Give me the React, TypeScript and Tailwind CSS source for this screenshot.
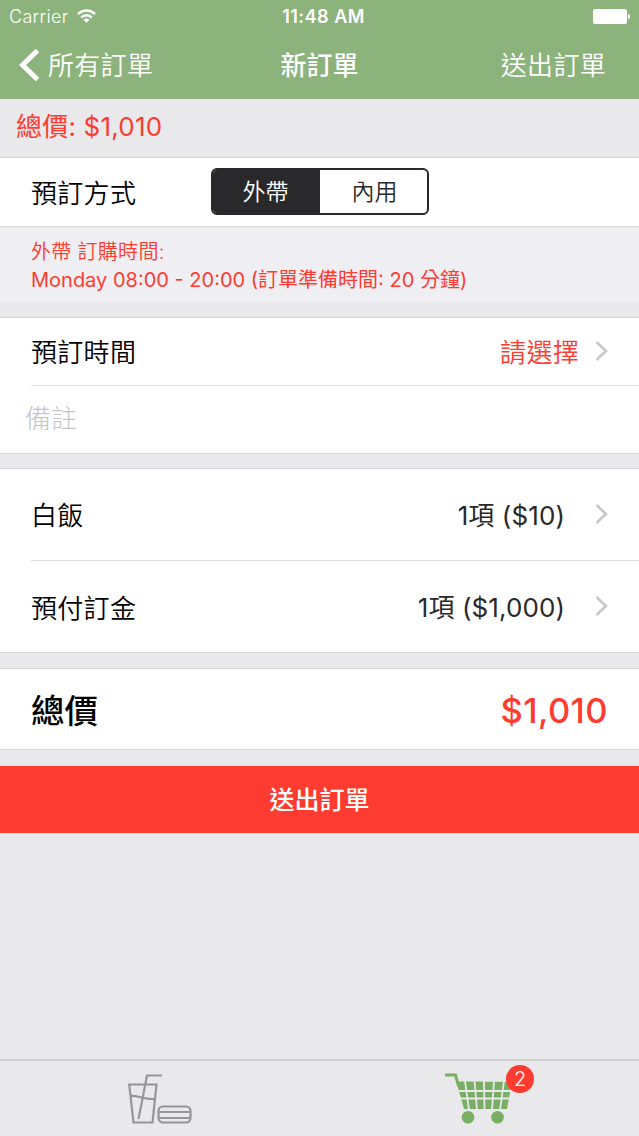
import React, { useState } from "react";

type OrderItem = {
  name: string;
  summary: string;
};

const items: OrderItem[] = [
  { name: "白飯", summary: "1項 ($10)" },
  { name: "預付訂金", summary: "1項 ($1,000)" },
];

const Chevron = () => (
  <svg width="13" height="20" viewBox="0 0 13 20" fill="none" className="mb-0.5 shrink-0">
    <path d="M1.5 1L11 10L1.5 19" stroke="#c7c7cc" strokeWidth="2.6" />
  </svg>
);

const WifiIcon = () => (
  <svg width="19" height="15" viewBox="0 0 19 15" fill="none">
    <path d="M1 5C5.8 0.4 13.2 0.4 18 5" stroke="white" strokeWidth="2.5" />
    <path d="M4.2 8.5C7.2 5.6 11.8 5.6 14.8 8.5" stroke="white" strokeWidth="2.5" />
    <path d="M9.5 13.8L6.4 10.8C8.2 9.2 10.8 9.2 12.6 10.8Z" fill="white" />
  </svg>
);

const FoodIcon = () => (
  <svg width="64" height="52" viewBox="0 0 64 52" fill="none" stroke="#969698" strokeWidth="2.2">
    <path d="M1.2 11.5H28.5L24.5 49.5H5.5Z" />
    <path d="M2.500 23C10 22 16 27 27.500 26" />
    <path d="M10.500 46L19 2.500H34" />
    <rect x="30.500" y="33.500" width="32" height="16" rx="4.500" />
    <path d="M31 39H62M31 45H62" />
  </svg>
);

const CartIcon = () => (
  <svg width="68" height="52" viewBox="0 0 68 52" fill="none">
    <path d="M0 2H10.500L13.500 13" stroke="#7aae65" strokeWidth="3" />
    <path d="M11.500 8.700H67L62 36H14.500H19.500Z" fill="#7aae65" />
    <path d="M11.500 8.700L19 36H40V8.700Z" fill="#7aae65" />
    <path d="M12 18H67M14 25.500H66" stroke="#e9e9eb" strokeWidth="2" />
    <path d="M20 8L24 37M29.500 8L32 37M39 8L39.500 37M49 8L47 37M59 8L55 37" stroke="#e9e9eb" strokeWidth="1.800" />
    <circle cx="23" cy="44.300" r="6.300" fill="#7aae65" />
    <circle cx="52.500" cy="44.300" r="6.300" fill="#7aae65" />
  </svg>
);

export default function App() {
  const [mode, setMode] = useState<"takeout" | "dinein">("takeout");

  return (
    <div className="flex h-[1136px] w-[639px] flex-col overflow-hidden bg-[#e9e9eb] font-[Inter,'Noto_Sans_CJK_TC',sans-serif] text-[26px] leading-none font-[350] text-black">
      <header className="h-[99px] shrink-0 bg-[#8db37c] text-white">
        {/* Status bar */}
        <div className="grid h-8 grid-cols-3 items-center pr-[9px] pl-[9px]">
          <div className="flex items-center gap-2">
            <span className="pt-0.5 text-[18px] tracking-[0.3px]">Carrier</span>
            <WifiIcon />
          </div>
          <span className="pt-0.5 pl-2 text-center text-[18px] font-semibold tracking-[0.5px] whitespace-nowrap">11:48 AM</span>
          <div className="flex items-center justify-end gap-px">
            <div className="h-[15px] w-[34px] rounded-[2px] bg-white" />
            <div className="h-[5px] w-[2px] rounded-r bg-white" />
          </div>
        </div>
        {/* Nav bar */}
        <div className="grid h-[66px] grid-cols-3 items-center pr-[33px] pl-[19px]">
          <button className="flex items-center gap-[9px]">
            <svg width="20" height="32" viewBox="0 0 20 32" fill="none">
              <path d="M18.5 1.5L3.5 16L18.5 30.5" stroke="white" strokeWidth="5" />
            </svg>
            <span className="pt-0.5 tracking-[0.3px] whitespace-nowrap">所有訂單</span>
          </button>
          <h1 className="pt-0.5 pl-3.5 text-center font-medium">新訂單</h1>
          <button className="pt-0.5 text-right tracking-[0.3px]">送出訂單</button>
        </div>
      </header>

      <div className="flex h-[58px] shrink-0 items-center pb-0.5 pl-4 font-normal tracking-[0.2px] text-[#fe3b30]">總價: $1,010</div>

      <section className="flex h-[70px] shrink-0 items-center border-y border-[#d6d6d9] bg-white pl-[31px]">
        <span className="w-[180px] pt-[3px] tracking-[0.3px]">預訂方式</span>
        <div className="mb-px grid h-[47px] w-[218px] grid-cols-2 overflow-hidden rounded-[6px] border-2 border-[#29292b] text-[23px]">
          <button onClick={() => setMode("takeout")} className={mode === "takeout" ? "bg-[#29292b] pt-0.5 pr-0.5 text-white" : "pt-0.5 pr-0.5 text-[#29292b]"}>外帶</button>
          <button onClick={() => setMode("dinein")} className={mode === "dinein" ? "bg-[#29292b] pt-0.5 pl-0.5 text-white" : "pt-0.5 pl-0.5 text-[#29292b]"}>內用</button>
        </div>
      </section>
      <div className="h-[76px] shrink-0 bg-[#efeff3] pt-[11px] pl-[31px] text-[20px] leading-7 text-[#fe3b30]">
        <p className="tracking-[0.3px]">外帶 訂購時間:</p>
        <p className="font-normal whitespace-nowrap">Monday 08:00 - 20:00 (訂單準備時間: 20 分鐘)</p>
      </div>

      <section className="mt-3.5 h-[137px] shrink-0 border-y border-[#d6d6d9] bg-white">
        <div className="ml-[31px] flex h-[68px] items-center border-b border-[#e3e3e6] pr-[31px]">
          <span className="flex-1 pt-0.5 tracking-[0.3px]">預訂時間</span>
          <span className="mr-4 pt-0.5 tracking-[0.3px] text-[#fe3b30]">請選擇</span>
          <Chevron />
        </div>
        <div className="flex h-[66px] items-center pl-[25px] font-light text-[#c4c4c9]">備註</div>
      </section>

      <section className="mt-[14px] h-[185px] shrink-0 border-y border-[#d6d6d9] bg-white">
        {items.map((item, i) => (
          <div key={item.name} className={`ml-[31px] flex h-[92px] items-center pr-[31px] ${i < items.length - 1 ? "border-b border-[#dedee1]" : ""}`}>
            <span className="flex-1 pt-[3px] tracking-[0.3px]">{item.name}</span>
            <span className="mr-[30px] pt-0.5 font-normal tracking-[0.1px] text-[#29292b]">{item.summary}</span>
            <Chevron />
          </div>
        ))}
      </section>

      <section className="mt-[15px] flex h-[82px] shrink-0 items-center justify-between border-y border-[#d6d6d9] bg-white pt-1 pr-[31px] pl-[31px] text-[33.5px] font-medium">
        <span className="pt-0.5">總價</span>
        <span className="text-[34.5px] tracking-[0.4px] text-[#fe3b30]">$1,010</span>
      </section>

      <button className="mt-4 h-[67px] shrink-0 bg-[#fe3b30] pt-0.5 text-[25px] font-medium text-white">送出訂單</button>

      <nav className="mt-auto grid h-[77px] shrink-0 grid-cols-2 border-t-2 border-[#d0d0d3]">
        <button className="flex justify-center pt-3">
          <FoodIcon />
        </button>
        <button className="flex justify-center pt-3">
          <div className="relative">
            <CartIcon />
            <span className="absolute -top-2 left-[61px] flex size-7 items-center justify-center rounded-full bg-[#fe3b30] text-[20px] text-white">2</span>
          </div>
        </button>
      </nav>
    </div>
  );
}
